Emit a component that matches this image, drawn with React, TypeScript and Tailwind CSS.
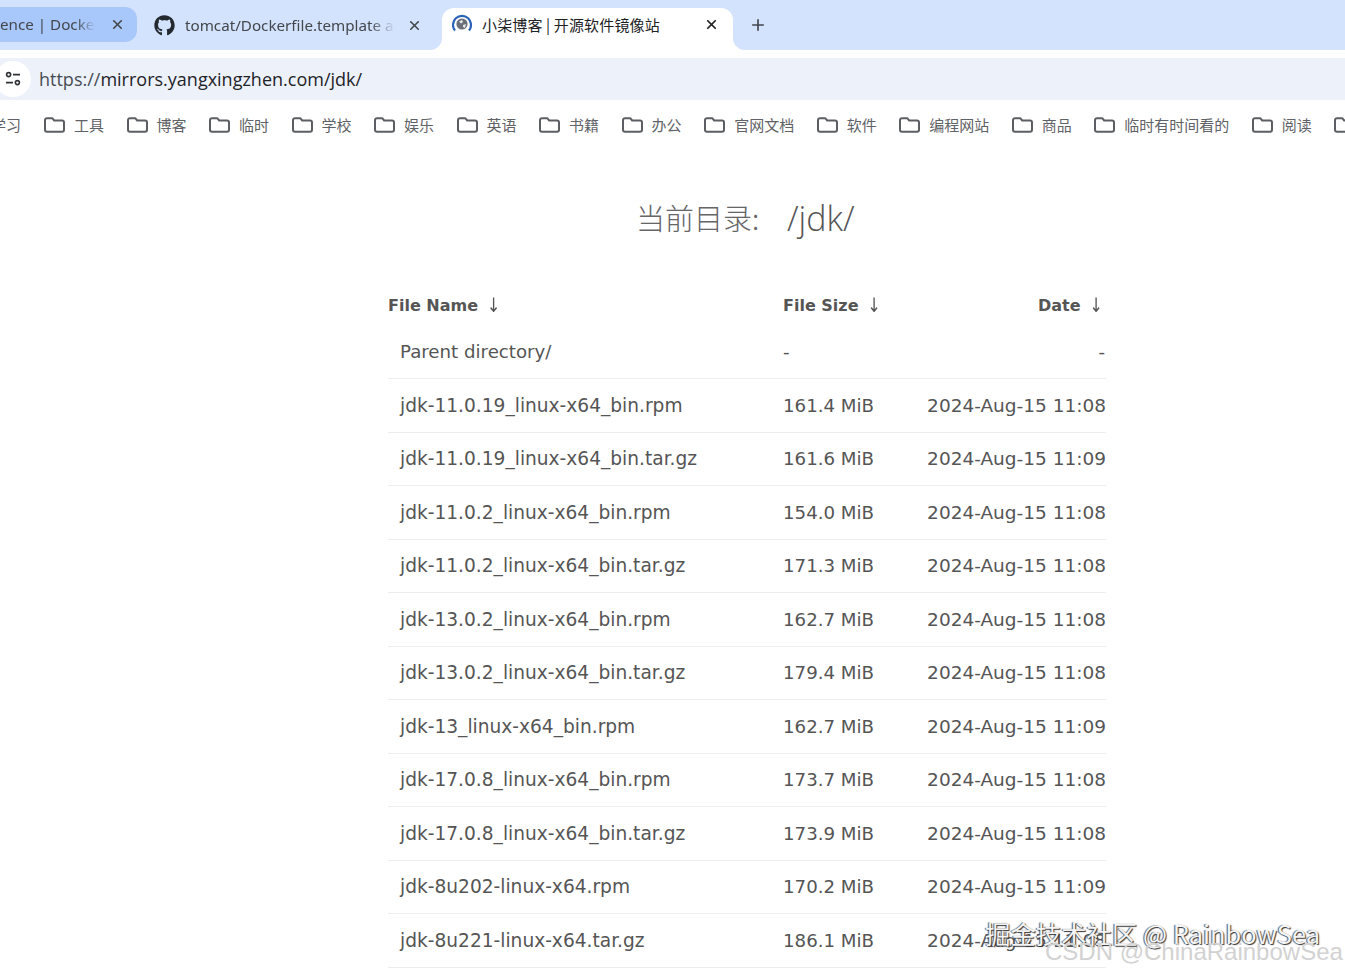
import React from 'react'
import { FaGithub } from 'react-icons/fa'
import { Plus, X } from 'lucide-react'

const cjk = "font-['Noto_Sans_CJK_SC','Liberation_Sans',sans-serif]"

const bookmarks = ['工具', '博客', '临时', '学校', '娱乐', '英语', '书籍', '办公', '官网文档', '软件', '编程网站', '商品', '临时有时间看的', '阅读']

const files = [
  ['jdk-11.0.19_linux-x64_bin.rpm', '161.4 MiB', '2024-Aug-15 11:08'],
  ['jdk-11.0.19_linux-x64_bin.tar.gz', '161.6 MiB', '2024-Aug-15 11:09'],
  ['jdk-11.0.2_linux-x64_bin.rpm', '154.0 MiB', '2024-Aug-15 11:08'],
  ['jdk-11.0.2_linux-x64_bin.tar.gz', '171.3 MiB', '2024-Aug-15 11:08'],
  ['jdk-13.0.2_linux-x64_bin.rpm', '162.7 MiB', '2024-Aug-15 11:08'],
  ['jdk-13.0.2_linux-x64_bin.tar.gz', '179.4 MiB', '2024-Aug-15 11:08'],
  ['jdk-13_linux-x64_bin.rpm', '162.7 MiB', '2024-Aug-15 11:09'],
  ['jdk-17.0.8_linux-x64_bin.rpm', '173.7 MiB', '2024-Aug-15 11:08'],
  ['jdk-17.0.8_linux-x64_bin.tar.gz', '173.9 MiB', '2024-Aug-15 11:08'],
  ['jdk-8u202-linux-x64.rpm', '170.2 MiB', '2024-Aug-15 11:09'],
  ['jdk-8u221-linux-x64.tar.gz', '186.1 MiB', '2024-Aug-15 11:08'],
]

const FolderIcon = () => (
  <svg width="21" height="16" viewBox="0 0 21 16" fill="none" stroke="#5b5e62" strokeWidth="2" className="shrink-0">
    <path d="M3 1.2h5.2l2 2.3H18a2 2 0 0 1 2 2v7.3a2 2 0 0 1-2 2H3a2 2 0 0 1-2-2V3.2a2 2 0 0 1 2-2z" strokeLinejoin="round" />
  </svg>
)

const SiteFavicon = () => (
  <svg width="20" height="20" viewBox="0 0 20 20" fill="none" className="shrink-0">
    <path d="M3 16.5A9 9 0 1 1 17 16.5" stroke="#2a62b8" strokeWidth="2.2" />
    <circle cx="10" cy="10" r="5.6" fill="#6b7078" />
    <path d="M7 7.5l3-1.5 1 2-2 1.5zM11 11l3-1-1 4-2-1z" fill="#e6e8ea" />
  </svg>
)

const TuneIcon = () => (
  <svg width="16" height="16" viewBox="0 0 16 16" fill="none" stroke="#2f3237" strokeWidth="1.6">
    <circle cx="3.6" cy="3.6" r="2" />
    <path d="M8 3.6h7M1 11.6h7" />
    <circle cx="12.4" cy="11.6" r="2" />
  </svg>
)

const SortHead = ({ label }: { label: string }) => (
  <span className="font-bold text-[#555]">
    {label}
    <span className="ml-[9px] inline-block scale-y-125 font-normal">↓</span>
  </span>
)

export default function App() {
  return (
    <div className="relative h-[974px] w-[1345px] overflow-hidden bg-white font-['DejaVu_Sans',sans-serif]">
      {/* tab strip */}
      <div className="flex h-[50px] items-start bg-[#d3e3fd] font-['Noto_Sans',sans-serif]">
        <div className="mt-[7px] flex h-[35px] w-[137px] shrink-0 items-center rounded-r-[12px] bg-[#a8c7fa]">
          <span className="w-[95px] shrink-0 overflow-hidden text-[15.2px] whitespace-nowrap text-[#44474c] [mask-image:linear-gradient(to_right,black_80%,transparent)]">
            ence | Docker
          </span>
          <X size={15} strokeWidth={2.6} color="#44474c" className="ml-[15px] shrink-0" />
        </div>
        <div className="flex h-[50px] w-[305px] shrink-0 items-center pl-[17px]">
          <FaGithub size={21} color="#24292f" className="shrink-0" />
          <span className="ml-[10px] w-[210px] overflow-hidden text-[15.2px] whitespace-nowrap text-[#44474c] [mask-image:linear-gradient(to_right,black_88%,transparent)]">
            tomcat/Dockerfile.template at main
          </span>
          <X size={15} strokeWidth={2.6} color="#44474c" className="ml-[12px] shrink-0" />
        </div>
        <div className="relative mt-[8px] flex h-[42px] w-[291px] shrink-0 items-start rounded-t-[12px] bg-white pt-[6px] pl-[10px]">
          <SiteFavicon />
          <span className={`ml-[10px] w-[222px] pt-[1px] text-[15px] leading-[20px] tracking-[0.15px] whitespace-nowrap text-[#202124] ${cjk}`}>
            小柒博客 | 开源软件镜像站
          </span>
          <X size={15} strokeWidth={2.8} color="#202124" className="mt-[3px] shrink-0" />
          <div className="absolute bottom-0 left-[-12px] h-[12px] w-[12px] bg-white">
            <div className="h-full w-full rounded-br-[12px] bg-[#d3e3fd]" />
          </div>
          <div className="absolute right-[-12px] bottom-0 h-[12px] w-[12px] bg-white">
            <div className="h-full w-full rounded-bl-[12px] bg-[#d3e3fd]" />
          </div>
        </div>
        <Plus size={18} strokeWidth={2.2} color="#44474c" className="mt-[16px] ml-[16px] shrink-0" />
      </div>

      {/* address row */}
      <div className="h-[50px] bg-white pt-[8px]">
        <div className="flex h-[42px] items-center bg-[#edf2fa]">
          <div className="ml-[-5px] flex h-[36px] w-[36px] shrink-0 items-center justify-center rounded-full bg-white">
            <TuneIcon />
          </div>
          <span className="ml-[8px] font-['Open_Sans',sans-serif] text-[18px] text-[#1f2329]">
            <span className="text-[#474c53]">https://</span>mirrors.yangxingzhen.com/jdk/
          </span>
        </div>
      </div>

      {/* bookmarks */}
      <div className={`flex h-[50px] items-center gap-[22.5px] overflow-hidden text-[15px] whitespace-nowrap text-[#5f6266] ${cjk}`}>
        <div className="ml-[-9px] w-[30.5px] shrink-0">学习</div>
        {bookmarks.map((name) => (
          <div key={name} className="flex shrink-0 items-center gap-[9px]">
            <FolderIcon />
            <span>{name}</span>
          </div>
        ))}
        <FolderIcon />
      </div>

      {/* listing */}
      <div className="ml-[388px] w-[718px]">
        <h1 className="mt-[46px] ml-[248px] flex h-[44px] items-center font-light text-[#666]">
          <span className={`w-[151px] text-[29px] font-light ${cjk}`}>当前目录:</span>
          <span className="font-['Open_Sans',sans-serif] text-[34px] font-light text-[#555]">/jdk/</span>
        </h1>

        <div className="mt-[43px] flex h-[46px] items-center text-[16px]">
          <div className="w-[395px]"><SortHead label="File Name" /></div>
          <div className="w-[130px]"><SortHead label="File Size" /></div>
          <div className="flex-1 pr-[3px] text-right"><SortHead label="Date" /></div>
        </div>

        <div className="flex h-[50px] items-center border-b border-[#eeeeee] pb-[4px] text-[18.2px] text-[#555]">
          <div className="w-[395px] pl-[12px]">Parent directory/</div>
          <div className="w-[130px]">-</div>
          <div className="flex-1 pr-[1px] text-right">-</div>
        </div>

        {files.map(([name, size, date]) => (
          <div key={name} className="flex h-[53.5px] items-baseline border-b border-[#eeeeee] pt-[12.5px] text-[#555]">
            <div className="w-[395px] pl-[12px] text-[18.6px] whitespace-nowrap">{name}</div>
            <div className="w-[130px] text-[18.2px] whitespace-nowrap">{size}</div>
            <div className="flex-1 text-right text-[18.5px] whitespace-nowrap">{date}</div>
          </div>
        ))}
      </div>

      {/* image watermarks */}
      <div className={`absolute top-[916px] left-[985px] text-[25.4px] leading-[34px] whitespace-nowrap text-[#f4f4f4] [text-shadow:1px_1px_1px_#333,-1px_0_1px_#555] ${cjk}`}>
        掘金技术社区 @ RainbowSea
      </div>
      <div className="absolute top-[936px] left-[1045px] font-['Liberation_Sans',sans-serif] text-[24px] leading-[32px] whitespace-nowrap text-[#d2d2d2]">
        CSDN @ChinaRainbowSea
      </div>
    </div>
  )
}
